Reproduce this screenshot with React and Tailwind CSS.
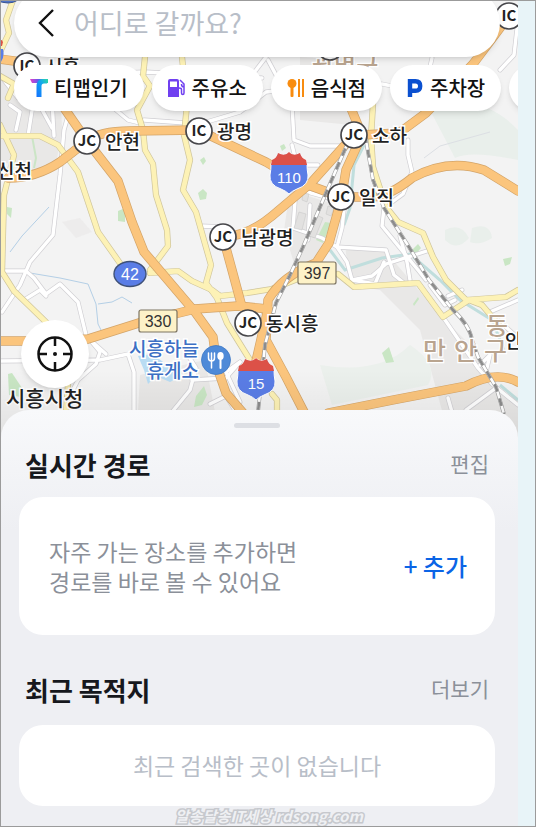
const WHITE_ROADS = [
  'M70 58 L74 95 L64 130 L60 175 L53 235 L30 262 L20 285 L2 312',
  'M0 75 L18 98 L40 106 L52 128',
  'M10 105 L20 112 L16 130',
  'M52 100 L54 136',
  'M34 98 L28 136',
  'M110 105 L128 120 L140 123',
  'M90 74 L145 72 L182 74 L262 78',
  'M518 20 L514 55 L500 70',
  'M144 120 L200 124 L240 112 L266 92 L300 88',
  'M268 60 L292 105 L294 140 L310 146 L340 146',
  'M432 58 L427 80 L424 100',
  'M382 84 L392 86',
  'M266 57 L250 78',
  'M0 271 L26 271 L34 278 L46 294 L60 284 L78 302 L86 335 L100 352 L96 364 L78 380 L70 396',
  'M24 300 L40 290 L46 296',
  'M0 361 L100 360 L128 354 L134 372 L134 412',
  'M88 338 L106 354',
  'M200 226 L223 227',
  'M292 145 L297 165 L318 165',
  'M296 188 L293 228 L322 238 L337 247 L386 250 L394 275 L404 283',
  'M344 210 L342 228 L337 247 L347 262 L352 280 L372 276 L386 264 L430 250',
  'M408 140 L408 155 L412 172 L403 194 L384 208',
  'M384 208 L382 226 L418 270 L426 280',
  'M400 236 L407 262 L410 280',
  'M352 280 L375 284 L384 262',
  'M300 190 L322 196 L340 202',
  'M310 205 L308 240',
  'M443 317 L478 368 L492 384 L518 405',
  'M430 285 L445 305 L455 300',
  'M448 296 L462 290',
  'M490 312 L518 300',
  'M498 320 L518 338',
  'M480 365 L490 355 L486 372',
  'M448 398 L452 412 M466 410 L496 388',
  'M172 412 L190 390 L196 368 L186 352',
  'M192 380 L226 378 L240 362',
  'M240 362 L226 372 L240 402',
  'M262 308 L256 320',
  'M210 404 L226 396 L236 412',
]

const YELLOW_ROADS = [
  'M13 0 L6 20 L9 33 L0 52',
  'M145 57 L143 76 L150 86 L137 110 L143 130 L145 150 L153 164 L156 195 L167 230 L168 246 L150 270',
  'M182 57 L187 105 L184 135 L190 160 L183 190 L196 212 L211 265 L206 283 L217 298 L227 323 L250 360',
  'M150 273 L178 271 L192 281 L212 290 L220 296 L247 293 L272 289 L300 278',
  'M0 136 L40 136 L58 145 L78 172 L98 232 L122 266',
  'M0 125 L14 155 L4 195 L2 272 L14 291 L50 326',
  'M0 76 L14 84 L8 98',
  'M373 104 L371 137 L373 167 L386 207 L398 222 L423 233 L433 257 L446 280 L466 300 L506 297 L518 290',
  'M338 274 L354 287 L418 283 L443 317 L469 300 L482 305 L499 325',
  'M272 394 L277 400 L277 412',
  'M68 385 L66 412',
]

const ORANGE_ROADS = [
  'M0 59 L29 63 L62 105 L87 141 L118 181 L132 222 L144 252 L195 312 L213 337 L217 367 L226 393 L244 414',
  'M0 341 L40 341 L88 339 L142 322 L195 309 L238 306 L268 309',
  'M223 237 L232 270 L242 307',
  'M87 141 L60 162 Q36 178 8 178',
  'M87 141 Q100 131 130 131 L198 130 L266 162 L300 182 L341 197 L372 197 Q390 196 412 178 Q448 158 484 170 L518 191',
  'M354 135 L311 183 L272 216 Q248 236 223 237',
  'M362 135 L346 170 L341 200 L329 243 L316 263 Q282 276 268 300 L266 340 L286 377 L304 412',
  'M350 106 L362 135 L399 133 L426 113 L473 64 L509 16',
  'M328 413 L393 400 L466 386 Q496 370 518 382',
  'M268 309 L254 370',
]

const RAILS = [
  'M352 135 L346 147 L326 193 L303 247 L290 275 L276 303 L265 345 L258 412',
  'M365 135 L373 180 L384 208 L409 247 L429 280 L453 310 Q470 326 472 340 L478 357 L496 387 L504 414',
]

const PARKS = [
  'M118 211 l7 -3 v14 l-7 -1z',
  'M200 160 l4 -3 2 4 -3 4z',
  'M198 193 l5 -4 4 4 -1 6 -6 1z',
  'M7 207 l5 1 -1 10 -4 -4z',
  'M8 374 l4 -1 12 18 -3 6 -12 -2z',
  'M196 396 l8 -10 3 9 -5 10 -8 2z',
  'M382 353 l7 -6 5 15 -8 1z',
  'M413 304 l5 -7 1 2 -5 7z',
  'M503 259 l9 -2 -2 7 -5 2z',
  'M316 240 l9 -18 6 1 -8 20z',
  'M28 60 l8 30 -6 2z',
  'M280 146 l4 -2 2 4 -4 3z',
  'M412 250 l6 -6 3 4 -5 6z',
]

const JUNCTIONS = [
  { x: 27, y: 66, code: 'IC', name: '시흥' },
  { x: 87, y: 141, code: 'JC', name: '안현' },
  { x: 199, y: 131, code: 'IC', name: '광명' },
  { x: 330, y: 47 },
  { x: 509, y: 16, code: 'IC' },
  { x: 354, y: 135, code: 'JC', name: '소하' },
  { x: 341, y: 197, code: 'JC', name: '일직' },
  { x: 223, y: 237, code: 'JC', name: '남광명' },
  { x: 248, y: 323, code: 'JC', name: '동시흥' },
]

function Roads({ paths, casing, fill, width }) {
  return (
    <g fill="none" strokeLinejoin="round" strokeLinecap="round">
      {paths.map((d) => <path key={d} d={d} stroke={casing} strokeWidth={width + 1.4} />)}
      {paths.map((d) => <path key={d} d={d} stroke={fill} strokeWidth={width} />)}
    </g>
  )
}

function Junction({ x, y, code, name }) {
  return (
    <g>
      <circle cx={x} cy={y} r="13" fill="#fff" stroke="#46464a" strokeWidth="1.7" />
      {code && <text x={x} y={y + 5} textAnchor="middle" fontSize="15" fontWeight="700" fill="#222">{code}</text>}
      {name && (
        <text x={x + 18} y={y + 8} fontSize="19" fontWeight="500" fill="#222" stroke="#fff" strokeWidth="3" paintOrder="stroke">
          {name}
        </text>
      )}
    </g>
  )
}

function Shield({ x, y, label }) {
  return (
    <g transform={`translate(${x} ${y})`}>
      <path d="M-16 -13 Q-12 -16 -11 -20 Q-4 -16 0 -21 Q4 -16 11 -20 Q12 -16 16 -13 L18 -9 Q18 -3 19 2 Q20 12 8 16 Q3 18 0 21 Q-3 18 -8 16 Q-20 12 -19 2 Q-18 -3 -18 -9Z" fill="#5a7de6" stroke="#fff" strokeWidth="1" />
      <path d="M-18 -8 L-17 -13 Q-12 -15 -11 -20 Q-4 -16 0 -21 Q4 -16 11 -20 Q12 -15 17 -13 L18 -8Z" fill="#dc5148" />
      <text y="10" textAnchor="middle" fontSize="15" fontFamily="Liberation Sans, sans-serif" fill="#fff">{label}</text>
    </g>
  )
}

function RoadSign({ x, y, label }) {
  return (
    <g>
      <rect x={x - 19} y={y - 11} width="38" height="22" rx="2" fill="#fdf2c8" stroke="#7d7461" strokeWidth="1.2" />
      <text x={x} y={y + 6} textAnchor="middle" fontSize="16" fontFamily="Liberation Sans, sans-serif" fill="#333">{label}</text>
    </g>
  )
}

function MapCanvas() {
  return (
    <svg
      viewBox="1 1 517 441"
      preserveAspectRatio="xMidYMin slice"
      className="absolute inset-0 h-full w-full"
      fontFamily="'Noto Sans CJK KR', sans-serif"
      role="img"
      aria-label="지도"
    >
      <defs>
        <linearGradient id="mapShade" x1="0" y1="0" x2="0" y2="1">
          <stop offset="0" stopColor="#000" stopOpacity="0" />
          <stop offset="1" stopColor="#000" stopOpacity=".08" />
        </linearGradient>
      </defs>
      <rect width="520" height="445" fill="#f3f3f3" />

      {/* built-up areas */}
      <g fill="#e9e8e7">
        <path d="M0 60 L60 75 L62 130 L56 165 L36 176 L0 160Z" />
        <path d="M290 190 L336 205 L318 262 L296 270 L284 230Z" />
        <path d="M345 245 L386 252 L440 315 L475 350 L492 385 L518 400 V440 H450 L420 330 L380 290 L350 285Z" />
        <path d="M300 57 L350 60 L352 125 L300 120Z" />
        <path d="M140 375 L205 360 L215 412 H138Z" />
        <path d="M62 222 L80 218 L92 232 L76 238Z" opacity=".6" />
      </g>
      <path d="M430 110 Q480 90 518 130 V160 Q470 150 455 158Z M445 230 q16 -8 24 8 q-12 14 -24 2z M472 228 q18 -6 20 10 q-12 8 -22 4z" fill="#e9efeb" />
      <path d="M320 365 q60 10 90 -20 q30 20 18 40 l-96 20z" fill="#ebf0ec" />
      <g fill="#c9e6c4">
        {PARKS.map((d) => <path key={d} d={d} />)}
      </g>

      {/* water */}
      <path d="M138 356 l14 -2 14 10 12 14 -8 4 -14 -6 -8 8 -4 -14z" fill="#b9dcf3" />
      <g fill="none" stroke="#b4cfe6" strokeWidth="1">
        <path d="M30 273 L60 278 L88 284 L96 304 L98 324 L104 336 M98 304 L112 302 L122 297 L132 303" />
        <path d="M10 252 L22 236 L49 207" />
        <path d="M490 132 L440 146 L424 158" stroke="#dcdfe4" />
      </g>
      <g fill="none" stroke="#c0dedd" strokeWidth="3">
        <path d="M364 145 L354 165 L350 208 L344 225" />
        <path d="M330 250 L345 270 L382 258 L410 254 L440 280 L460 300 L492 320 L504 350" />
        <path d="M500 385 L518 400" />
      </g>
      <path d="M32 136 L36 158 L34 168" fill="none" stroke="#cbe5c6" strokeWidth="2" />

      <Roads paths={WHITE_ROADS} casing="#d0cfd3" fill="#ffffff" width={3.4} />

      {/* station blocks */}
      <g fill="#e2e1e0" stroke="#c9c9c9" strokeWidth=".6">
        <path d="M299 212 l7 2 -4 16 -8 -2z" />
        <path d="M316 215 l7 3 -8 20 -6 -2z" />
        <path d="M303 193 l6 1 -2 8 -5 -2z" />
        <path d="M328 206 l6 2 -3 8 -5 -2z" />
      </g>

      <Roads paths={YELLOW_ROADS} casing="#cfc59c" fill="#fdf2b6" width={4.8} />
      <Roads paths={ORANGE_ROADS} casing="#d3a468" fill="#fbc57d" width={8} />

      <g fill="none">
        {RAILS.map((d) => (
          <g key={d}>
            <path d={d} stroke="#a0a0a0" strokeWidth="3.8" />
            <path d={d} stroke="#fff" strokeWidth="2.6" />
            <path d={d} stroke="#8c8c8c" strokeWidth="2.6" strokeDasharray="8 7" />
          </g>
        ))}
      </g>

      {/* district names */}
      <g fill="#b9a48f" stroke="#fff" strokeWidth="2.5" paintOrder="stroke" fontWeight="500">
        <text x="312" y="73" fontSize="24">광명구</text>
        <text x="486" y="334" fontSize="24">동</text>
        <text x="423 454 484" y="360" fontSize="25">만안구</text>
      </g>

      <path d="M-4 0 Q9 6 18 0Z" fill="#4f74c8" stroke="#3c5590" />
      <path d="M0 38 L3 42 L2 46 H0Z" fill="#dc5148" />
      <path d="M0 49 H3 Q5 58 0 63Z" fill="#5a7de6" />

      {JUNCTIONS.map((j) => <Junction key={`${j.x}-${j.y}`} {...j} />)}

      <Shield x={289} y={173} label="110" />
      <Shield x={256} y={379} label="15" />
      <RoadSign x={317} y={273} label="397" />
      <RoadSign x={158} y={321} label="330" />

      <ellipse cx="130" cy="274" rx="16" ry="12.5" fill="#5a7de6" stroke="#3f5178" strokeWidth="1.4" />
      <text x="130" y="280" textAnchor="middle" fontSize="16" fontFamily="Liberation Sans, sans-serif" fill="#fff">42</text>

      {/* rest area */}
      <circle cx="216" cy="360" r="14.5" fill="#4e8ad8" stroke="#3f78c4" strokeWidth=".8" />
      <g fill="none" stroke="#fff" strokeLinecap="round" strokeWidth="1.5">
        <path d="M208.500 353 V358 Q208.500 361 211.500 361 Q214.500 361 214.500 358 V353 M211.500 353 V368" />
        <path d="M220.500 360 V368" strokeWidth="2" />
      </g>
      <ellipse cx="220.500" cy="356" rx="3.200" ry="4" fill="#fff" />
      <g fill="#3c6fc4" stroke="#fff" strokeWidth="3" paintOrder="stroke" fontSize="19" fontWeight="500" textAnchor="end">
        <text x="199" y="356">시흥하늘</text>
        <text x="199" y="378">휴게소</text>
      </g>

      <g fill="#222" stroke="#fff" strokeWidth="3" paintOrder="stroke" fontWeight="500">
        <text x="-3" y="178" fontSize="19">신천</text>
        <text x="6" y="406" fontSize="21">시흥시청</text>
        <text x="505" y="348" fontSize="19">안</text>
      </g>

      <rect x="0" y="370" width="520" height="75" fill="url(#mapShade)" />
    </svg>
  )
}

function TmapIcon() {
  return (
    <svg viewBox="0 0 18 18" className="size-[18px]" aria-hidden="true">
      <defs>
        <linearGradient id="tmapBar" x1="0" x2="1">
          <stop offset="0" stopColor="#e53fc8" />
          <stop offset=".5" stopColor="#5b5cf0" />
          <stop offset="1" stopColor="#19d7a0" />
        </linearGradient>
        <linearGradient id="tmapStem" x1="1" y1="0" x2="0" y2="1">
          <stop offset="0" stopColor="#2ed8a4" />
          <stop offset=".4" stopColor="#12a8ee" />
          <stop offset="1" stopColor="#1470ff" />
        </linearGradient>
      </defs>
      <path d="M0 0 H18 V4 H2Z" fill="url(#tmapBar)" />
      <path d="M18 0 L17 4.500 H14 Q11.500 4.500 11.500 7 V18 H6.500 V8 Q6.500 0 13 0Z" fill="url(#tmapStem)" />
    </svg>
  )
}

function FuelIcon() {
  return (
    <svg viewBox="0 0 18 18" className="size-[18px]" aria-hidden="true">
      <path fillRule="evenodd" d="M2 0 H9 Q11 0 11 2 V18 H0 V2 Q0 0 2 0Z M2 2.500 V8 H9 V2.500Z" fill="#7040f0" />
      <path d="M12 1 L16 5 V14 Q16 15.500 14.800 15.500 Q13.500 15.500 13.500 14 V10.500 Q13.500 9 11 9 M16 8 Q13.500 8 13.500 5" fill="none" stroke="#7040f0" strokeWidth="1.500" />
    </svg>
  )
}

function FoodIcon() {
  return (
    <svg viewBox="0 0 18 18" className="size-[18px]" aria-hidden="true">
      <g fill="#f88c10">
        <ellipse cx="5" cy="4.500" rx="4.500" ry="4.500" />
        <rect x="3.500" y="7" width="3" height="11" rx="1" />
        <rect x="11" y="0" width="2" height="18" />
        <rect x="15" y="0" width="2" height="18" />
      </g>
    </svg>
  )
}

function ParkingIcon() {
  return (
    <svg viewBox="0 0 18 18" className="size-[18px]" aria-hidden="true">
      <path d="M4 18 V2.200 H9.500 Q14.200 2.200 14.200 7 Q14.200 11.800 9.500 11.800 H4" fill="none" stroke="#0b50d0" strokeWidth="4.400" />
    </svg>
  )
}

const CATEGORIES = [
  { label: '티맵인기', Icon: TmapIcon },
  { label: '주유소', Icon: FuelIcon },
  { label: '음식점', Icon: FoodIcon },
  { label: '주차장', Icon: ParkingIcon },
]

function SearchBar() {
  return (
    <form className="-mt-3 mr-[18px] ml-[13px] flex h-[68px] items-center rounded-full bg-white pl-6 shadow-md">
      <button type="button" aria-label="뒤로" className="flex w-9 items-center">
        <svg viewBox="0 0 16 28" className="h-7 w-4" fill="none" stroke="#111" strokeWidth="2.400" aria-hidden="true">
          <path d="M15 1 L2 14 L15 27" />
        </svg>
      </button>
      <input
        type="text"
        aria-label="목적지 검색"
        placeholder="어디로 갈까요?"
        className="min-w-0 flex-1 bg-transparent text-[27px] text-black outline-none placeholder:text-[#b8bec8]"
      />
    </form>
  )
}

function CategoryChips() {
  return (
    <div className="mt-2 flex gap-2 overflow-hidden pb-2 pl-[13px]">
      {CATEGORIES.map(({ label, Icon }) => (
        <button
          key={label}
          type="button"
          className="flex h-[46px] shrink-0 items-center gap-1.5 rounded-full bg-white px-4 text-[20px] font-medium text-[#111] shadow-md"
        >
          <Icon />
          {label}
        </button>
      ))}
      <button type="button" aria-label="더 많은 카테고리" className="h-[46px] w-[110px] shrink-0 rounded-full bg-white shadow-md" />
    </div>
  )
}

function LocateButton() {
  return (
    <button
      type="button"
      aria-label="현재 위치"
      className="ml-5 flex size-[68px] items-center justify-center rounded-full bg-white shadow-md"
    >
      <svg viewBox="0 0 38 38" className="size-[38px]" fill="none" stroke="#111" strokeWidth="2.500" aria-hidden="true">
        <circle cx="19" cy="19" r="16.500" />
        <path d="M19 2.500 V11 M19 27 V35.500 M2.500 19 H11 M27 19 H35.500" />
        <circle cx="19" cy="19" r="2" fill="#111" stroke="none" />
      </svg>
    </button>
  )
}

function SectionHeader({ title, action }) {
  return (
    <div className="flex h-10 items-center justify-between px-1.5">
      <h2 className="text-[26px] font-bold text-[#16181d]">{title}</h2>
      <button type="button" className="text-[21px] text-[#8b9099]">{action}</button>
    </div>
  )
}

function BottomSheet() {
  return (
    <div className="relative -mt-8 flex flex-1 flex-col rounded-t-[28px] bg-[linear-gradient(#f8f9fb,#eeeff3_120px)] pr-[23px] pl-[18px]">
      <div className="mx-auto mt-[13px] h-[5px] w-[46px] rounded-full bg-[#dddfe4]" />

      <section className="mt-4">
        <SectionHeader title="실시간 경로" action="편집" />
        <div className="mt-[13px] flex h-[138px] items-center justify-between rounded-3xl bg-white pr-7 pl-[30px]">
          <p className="text-[23px] leading-[30px] text-[#8b9099]">
            자주 가는 장소를 추가하면
            <br />
            경로를 바로 볼 수 있어요
          </p>
          <button type="button" className="text-[24px] font-medium text-[#0b64e6]">+ 추가</button>
        </div>
      </section>

      <section className="mt-[34px]">
        <SectionHeader title="최근 목적지" action="더보기" />
        <div className="mt-4 flex h-[81px] items-center justify-center rounded-3xl bg-white">
          <p className="text-[23px] text-[#b8bec8]">최근 검색한 곳이 없습니다</p>
        </div>
      </section>

      <p className="pl-6 text-center text-[15px] leading-5 font-bold text-[#eff0f3] italic [-webkit-text-stroke:3px_#c6c8cd] [paint-order:stroke_fill]">
        알송달송IT세상 rdsong.com
      </p>
    </div>
  )
}

export default function App() {
  return (
    <div className="flex min-h-screen overflow-hidden border border-[#9b9b9b] bg-[#e8f4f8] font-['Noto_Sans_CJK_KR',sans-serif]">
      <main className="flex min-w-0 flex-1 flex-col">
        <div className="relative flex h-[441px] flex-col overflow-hidden">
          <MapCanvas />
          <div className="relative flex flex-1 flex-col justify-between pb-[54px]">
            <div>
              <SearchBar />
              <CategoryChips />
            </div>
            <LocateButton />
          </div>
        </div>
        <BottomSheet />
      </main>
      <div className="w-[17px] shrink-0" />
    </div>
  )
}
